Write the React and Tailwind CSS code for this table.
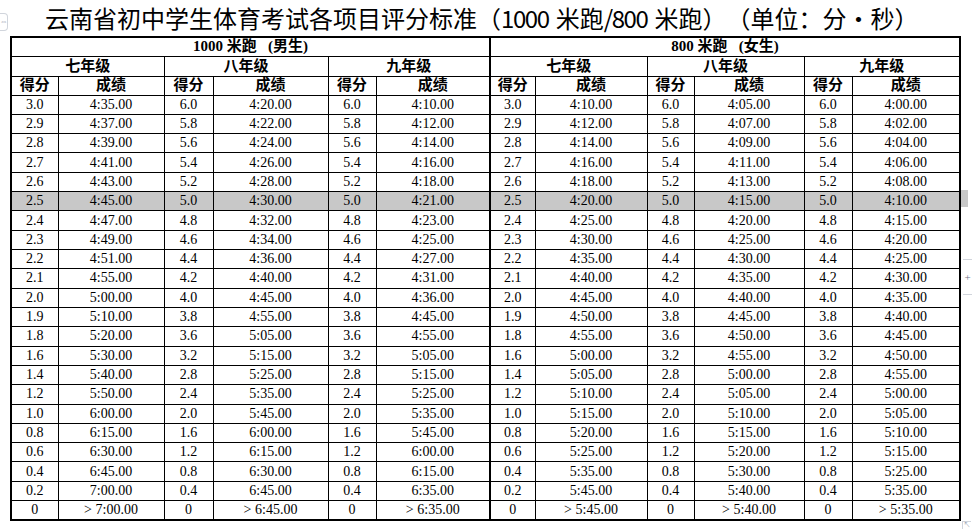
import React from "react";

const boys = {
  seven: [
    ["3.0", "4:35"], ["2.9", "4:37"], ["2.8", "4:39"], ["2.7", "4:41"], ["2.6", "4:43"],
    ["2.5", "4:45"], ["2.4", "4:47"], ["2.3", "4:49"], ["2.2", "4:51"], ["2.1", "4:55"],
    ["2.0", "5:00"], ["1.9", "5:10"], ["1.8", "5:20"], ["1.6", "5:30"], ["1.4", "5:40"],
    ["1.2", "5:50"], ["1.0", "6:00"], ["0.8", "6:15"], ["0.6", "6:30"], ["0.4", "6:45"],
    ["0.2", "7:00"], ["0", "> 7:00"],
  ],
  eight: [
    ["6.0", "4:20"], ["5.8", "4:22"], ["5.6", "4:24"], ["5.4", "4:26"], ["5.2", "4:28"],
    ["5.0", "4:30"], ["4.8", "4:32"], ["4.6", "4:34"], ["4.4", "4:36"], ["4.2", "4:40"],
    ["4.0", "4:45"], ["3.8", "4:55"], ["3.6", "5:05"], ["3.2", "5:15"], ["2.8", "5:25"],
    ["2.4", "5:35"], ["2.0", "5:45"], ["1.6", "6:00"], ["1.2", "6:15"], ["0.8", "6:30"],
    ["0.4", "6:45"], ["0", "> 6:45"],
  ],
  nine: [
    ["6.0", "4:10"], ["5.8", "4:12"], ["5.6", "4:14"], ["5.4", "4:16"], ["5.2", "4:18"],
    ["5.0", "4:21"], ["4.8", "4:23"], ["4.6", "4:25"], ["4.4", "4:27"], ["4.2", "4:31"],
    ["4.0", "4:36"], ["3.8", "4:45"], ["3.6", "4:55"], ["3.2", "5:05"], ["2.8", "5:15"],
    ["2.4", "5:25"], ["2.0", "5:35"], ["1.6", "5:45"], ["1.2", "6:00"], ["0.8", "6:15"],
    ["0.4", "6:35"], ["0", "> 6:35"],
  ],
};

const girls = {
  seven: [
    ["3.0", "4:10"], ["2.9", "4:12"], ["2.8", "4:14"], ["2.7", "4:16"], ["2.6", "4:18"],
    ["2.5", "4:20"], ["2.4", "4:25"], ["2.3", "4:30"], ["2.2", "4:35"], ["2.1", "4:40"],
    ["2.0", "4:45"], ["1.9", "4:50"], ["1.8", "4:55"], ["1.6", "5:00"], ["1.4", "5:05"],
    ["1.2", "5:10"], ["1.0", "5:15"], ["0.8", "5:20"], ["0.6", "5:25"], ["0.4", "5:35"],
    ["0.2", "5:45"], ["0", "> 5:45"],
  ],
  eight: [
    ["6.0", "4:05"], ["5.8", "4:07"], ["5.6", "4:09"], ["5.4", "4:11"], ["5.2", "4:13"],
    ["5.0", "4:15"], ["4.8", "4:20"], ["4.6", "4:25"], ["4.4", "4:30"], ["4.2", "4:35"],
    ["4.0", "4:40"], ["3.8", "4:45"], ["3.6", "4:50"], ["3.2", "4:55"], ["2.8", "5:00"],
    ["2.4", "5:05"], ["2.0", "5:10"], ["1.6", "5:15"], ["1.2", "5:20"], ["0.8", "5:30"],
    ["0.4", "5:40"], ["0", "> 5:40"],
  ],
  nine: [
    ["6.0", "4:00"], ["5.8", "4:02"], ["5.6", "4:04"], ["5.4", "4:06"], ["5.2", "4:08"],
    ["5.0", "4:10"], ["4.8", "4:15"], ["4.6", "4:20"], ["4.4", "4:25"], ["4.2", "4:30"],
    ["4.0", "4:35"], ["3.8", "4:40"], ["3.6", "4:45"], ["3.2", "4:50"], ["2.8", "4:55"],
    ["2.4", "5:00"], ["2.0", "5:05"], ["1.6", "5:10"], ["1.2", "5:15"], ["0.8", "5:25"],
    ["0.4", "5:35"], ["0", "> 5:35"],
  ],
};

const grades = ["seven", "eight", "nine"];
const gradeNames = ["七年级", "八年级", "九年级"];
const widths = [47, 106, 49, 115, 48, 114, 45, 112, 47, 110, 48, 108];

const th = "border border-black p-0 font-bold text-[15px] leading-none text-center";
const td = "border border-black p-0 text-[14px] leading-none text-center";

export default function App() {
  return (
    <div className="relative w-[972px] h-[529px] bg-white text-black overflow-hidden font-['Liberation_Serif','Noto_Sans_CJK_SC',serif]">
      {/* Word move handle */}
      <div className="absolute left-0 top-[13px] w-[8px] h-[18px] border border-l-0 border-gray-300 rounded-r-sm flex items-center justify-center text-[8px] text-gray-400 leading-none">
        ⇔
      </div>

      {/* Title */}
      <div className="h-[36px] flex items-center pl-[45px] font-['Noto_Sans_CJK_SC',sans-serif] text-[24px] leading-none whitespace-nowrap [text-spacing-trim:space-all]">
        云南省初中学生体育考试各项目评分标准（<span className="tracking-[-1.4px] mr-[7px]">1000</span>米跑<span className="tracking-[-1.4px] mr-[7px]">/800</span>米跑）（单位：分・秒）
      </div>

      <div className="relative ml-[10px] w-[951px]">
        <table className="w-[951px] table-fixed border-collapse border-2 border-black">
          <colgroup>
            {widths.map((w, i) => (
              <col key={i} style={{ width: w }} />
            ))}
          </colgroup>
          <thead>
            <tr className="h-[19px]">
              <th colSpan={6} className={`${th} border-r-2`}>1000 米跑&nbsp;&nbsp;&nbsp;(男生)</th>
              <th colSpan={6} className={th}>800 米跑&nbsp;&nbsp;&nbsp;(女生)</th>
            </tr>
            <tr className="h-[20px]">
              {[0, 1].map((side) =>
                gradeNames.map((g, i) => (
                  <th
                    key={`${side}-${i}`}
                    colSpan={2}
                    className={`${th} ${side === 0 && i === 2 ? "border-r-2" : ""}`}
                  >
                    {g}
                  </th>
                ))
              )}
            </tr>
            <tr className="h-[19px]">
              {[0, 1].map((side) =>
                gradeNames.map((g, i) => (
                  <React.Fragment key={`${side}-${i}`}>
                    <th className={th}>得分</th>
                    <th className={`${th} ${side === 0 && i === 2 ? "border-r-2" : ""}`}>成绩</th>
                  </React.Fragment>
                ))
              )}
            </tr>
          </thead>
          <tbody>
            {boys.seven.map((_, r) => (
              <tr key={r} className={`h-[19.32px] ${r === 5 ? "bg-[#c8c8c8]" : ""}`}>
                {[boys, girls].map((set, side) =>
                  grades.map((g, i) => {
                    const [score, time] = set[g][r];
                    return (
                      <React.Fragment key={`${side}-${g}`}>
                        <td className={td}>{score}</td>
                        <td className={`${td} ${side === 0 && i === 2 ? "border-r-2" : ""}`}>
                          {time}.00
                        </td>
                      </React.Fragment>
                    );
                  })
                )}
              </tr>
            ))}
          </tbody>
        </table>

        {/* highlight spill past the right edge */}
        <div className="absolute left-[951px] top-[154px] w-[7px] h-[17px] bg-[#c8c8c8]" />
      </div>

      {/* insert-row marker */}
      <div className="absolute right-0 top-[259px] w-[9px] h-[36px] border-y border-gray-300 flex items-center justify-center text-[11px] text-gray-500 leading-none">
        +
      </div>

      {/* resize handle */}
      <div className="absolute left-[962px] top-[521px] w-[9px] h-[8px] border-l border-t border-gray-300 text-[7px] text-gray-400 leading-none flex items-center justify-center">
        ↖
      </div>
    </div>
  );
}
